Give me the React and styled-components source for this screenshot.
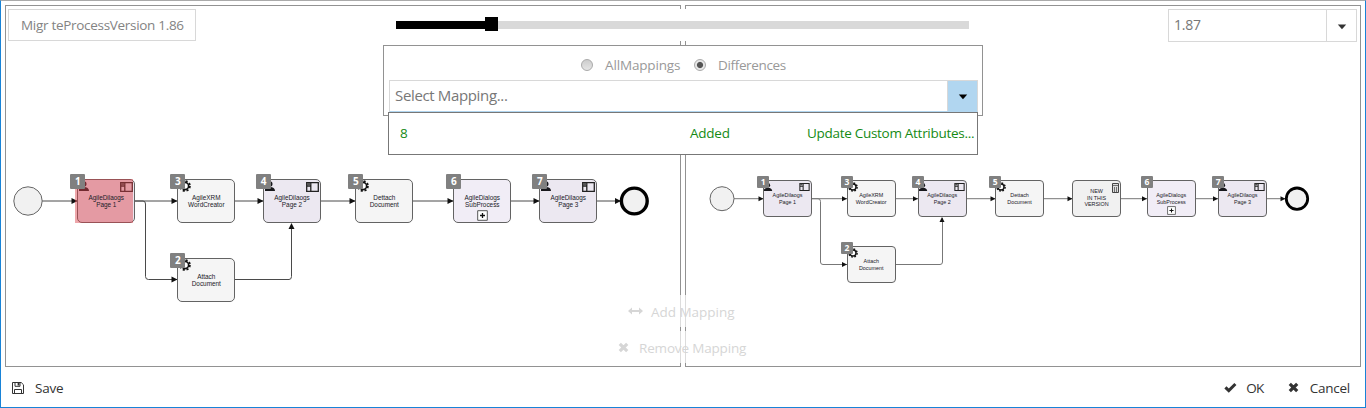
import React from "react";
import styled, { createGlobalStyle } from "styled-components";

const GlobalStyle = createGlobalStyle`
  * { box-sizing: border-box; }
  body { margin: 0; background: #fff; font-family: "Open Sans", "Noto Sans", sans-serif; }
`;

const Window = styled.main`
  position: relative;
  width: 1366px;
  height: 408px;
  display: flex;
  flex-direction: column;
  padding: 4px 4px 0;
  border: 1px solid #1883d7;
  border-top-color: #aaa;
  overflow: hidden;
`;

const Panels = styled.div`
  display: grid;
  grid-template-columns: 676px 676px;
  gap: 4px;
  height: 362px;
`;

const Panel = styled.section`
  position: relative;
  display: flex;
  align-items: flex-start;
  justify-content: ${(p) => (p.$end ? "flex-end" : "flex-start")};
  padding: 3px ${(p) => (p.$end ? 3 : 2)}px;
  border: 1px solid #929292;
`;

const Label = styled.span`
  display: inline-block;
  white-space: nowrap;
  font-size: ${(p) => p.$size || 13.5}px;
  letter-spacing: ${(p) => (p.$track === undefined ? -0.25 : p.$track)}px;
`;

const VersionBox = styled.div`
  width: 188px;
  height: 32px;
  padding-left: 12px;
  line-height: 28px;
  border: 1px solid #d8d8d8;
  color: #838383;
`;

const Select = styled.div`
  display: flex;
  width: ${(p) => p.$width}px;
  height: ${(p) => p.$height}px;
  line-height: 28px;
  border: 1px solid #d8d8d8;
  border-bottom-color: ${(p) => (p.$open ? "#b1d6f0" : "#d8d8d8")};
  color: #777;
  background: #fff;
`;

const SelectValue = styled.div`
  flex: 1;
  padding-left: 5px;
`;

const SelectButton = styled.button`
  width: 30px;
  padding: ${(p) => (p.$open ? "1px 0 0" : "2px 0 0")};
  display: flex;
  align-items: center;
  justify-content: center;
  border: 0;
  border-left: 1px solid #d8d8d8;
  background: ${(p) => (p.$open ? "#b1d6f0" : "#fff")};
  color: ${(p) => (p.$open ? "#000" : "#333")};
`;

const Overlay = styled.div`
  position: absolute;
  z-index: 3;
  left: 382px;
  top: 8px;
  width: 600px;
`;

const SliderArea = styled.div`
  height: 32px;
  padding: 8px 14px 0 13px;
  background: #fff;
`;

const Track = styled.div`
  display: flex;
  align-items: center;
  height: 14px;
  background: linear-gradient(#d9d9d9, #d9d9d9) 0 4px / 100% 8px no-repeat;
`;

const Filled = styled.div`
  width: 89px;
  height: 8px;
  background: #000;
  margin-top: 2px;
`;

const Thumb = styled.div`
  width: 13px;
  height: 14px;
  background: #000;
`;

const MappingBox = styled.div`
  height: 71px;
  margin-top: 4px;
  padding: 0 5px;
  border: 1px solid #929292;
  background: #fff;
`;

const Radios = styled.div`
  display: flex;
  align-items: center;
  height: 34px;
  padding: 3px 0 0 192px;
  color: #999;
`;

const Radio = styled.span`
  width: 12px;
  height: 12px;
  flex: none;
  margin: 1px 12px 0 0;
  border: 1px solid #aaa;
  border-radius: 50%;
  background: ${(p) => (p.$on ? "radial-gradient(circle, #555 0 2.6px, #e8e8e8 3.6px)" : "linear-gradient(#ccc, #e5e5e5)")};
`;

const RadioLabel = styled(Label)`
  width: 76px;
  margin-right: 13px;
`;

const Options = styled.div`
  display: grid;
  grid-template-columns: 290px 117px 1fr;
  align-items: center;
  position: relative;
  width: 590px;
  height: 43px;
  margin: -4px 0 0 5px;
  padding: 0 0 2px 11px;
  border: 1px solid #777;
  background: #fff;
  color: #158a15;
`;

const MappingActions = styled.div`
  position: absolute;
  z-index: 2;
  top: 294px;
  left: 611px;
  width: 144px;
  display: flex;
  flex-direction: column;
  align-items: stretch;
  gap: 4px;
`;

const MappingAction = styled.div`
  display: flex;
  align-items: center;
  height: 32px;
  padding: 1px 0 0 ${(p) => p.$indent}px;
  background: rgba(255, 255, 255, 0.68);
  color: #d6d6d6;
  svg { margin: 0 ${(p) => p.$gap}px 1px 0; flex: none; }
`;

const Footer = styled.footer`
  display: flex;
  align-items: center;
  height: 40px;
  padding: 2px 11px 0 7px;
  color: #333;
`;

const Command = styled.div`
  display: flex;
  align-items: center;
  gap: ${(p) => p.$gap}px;
  margin-left: ${(p) => p.$before || "0"};
  svg { margin-bottom: 1px; }
`;

const Canvas = styled.div`
  position: absolute;
  left: 0;
  top: 160px;
  width: 674px;
  height: 150px;
`;

const Wires = styled.svg`
  position: absolute;
  inset: 0;
`;

const Node = styled.div`
  position: absolute;
  left: ${(p) => p.$x}px;
  top: ${(p) => p.$y}px;
  width: ${(p) => p.$w}px;
  height: ${(p) => p.$h}px;
  display: flex;
  flex-direction: column;
  align-items: center;
  padding-top: ${(p) => p.$pad}px;
  border: 1px solid #636363;
  border-radius: ${(p) => (p.$small ? 4 : 5)}px;
  background: ${(p) => p.$fill};
  color: #202028;
  font-family: "Liberation Sans", sans-serif;
  font-size: ${(p) => (p.$small ? 5.4 : 6.4)}px;
  line-height: ${(p) => (p.$small ? 6.5 : 7.2)}px;
  white-space: nowrap;
`;

const Line = styled.span`
  position: relative;
  z-index: 1;
`;

const Badge = styled.span`
  position: absolute;
  z-index: 2;
  left: ${(p) => (p.$small ? -7 : -8)}px;
  top: ${(p) => (p.$small ? -5 : -6)}px;
  width: ${(p) => (p.$small ? 12 : 15)}px;
  height: ${(p) => (p.$small ? 12 : 15)}px;
  border-radius: 1px;
  background: #808080;
  color: #fff;
  text-align: center;
  font: bold ${(p) => (p.$small ? "8.5px/12px" : "10px/15px")} "Open Sans", sans-serif;
`;

const TypeIcon = styled.svg`
  position: absolute;
  left: ${(p) => (p.$small ? 0 : 1)}px;
  top: ${(p) => (p.$small ? 1 : 0)}px;
`;

const CornerIcon = styled.svg`
  position: absolute;
  top: 2px;
  right: ${(p) => (p.$small ? 1 : 1.5)}px;
`;

const SubprocessIcon = styled.svg`
  position: absolute;
  bottom: 1px;
`;

const Highlight = styled.span`
  position: absolute;
  left: -3px;
  top: -1px;
  width: 58px;
  height: 43.5px;
  background: rgba(218, 64, 72, 0.46);
`;

const Caret = () => (
  <svg width="10" height="6" viewBox="0 0 10 6"><path d="M.8 .5h8.4L5 5.2z" fill="currentColor" /></svg>
);

const CheckIcon = () => (
  <svg width="13" height="11" viewBox="0 0 13 11"><path d="M1.4 5.3 4.8 8.6 11.4 2" fill="none" stroke="currentColor" strokeWidth="3" /></svg>
);

const CrossIcon = () => (
  <svg width="11" height="11" viewBox="0 0 11 11"><path d="m1.8 1.8 7.4 7.4m0-7.4-7.4 7.4" fill="none" stroke="currentColor" strokeWidth="3.2" /></svg>
);

const ArrowsIcon = () => (
  <svg width="15" height="8" viewBox="0 0 15 8"><path d="M0 4 4 .5V3h7V.5L15 4l-4 3.5V5H4v2.5z" fill="currentColor" /></svg>
);

const SaveIcon = () => (
  <svg width="12" height="12" viewBox="0 0 12 12" fill="none" stroke="currentColor">
    <path d="M.5.5h8.7l2.3 2.3v8.7H.5zM2.5 11.5v-4h7v4M3 .5v3.8h5V.5" />
    <path d="M5.6 1h1.8v2.5H5.6z" fill="currentColor" stroke="none" />
  </svg>
);

const GearIcon = ({ small }) => (
  <TypeIcon $small={small} width={small ? 10 : 12} height={small ? 10 : 12} viewBox="0 0 12 12">
    <circle cx="6" cy="6" r="3.6" fill="#fff" stroke="#111" strokeWidth="1.6" />
    <circle cx="6" cy="6" r="4.9" fill="none" stroke="#111" strokeWidth="1.8" strokeDasharray="2.1 1.75" />
  </TypeIcon>
);

const PersonIcon = ({ small }) => (
  <TypeIcon $small={small} width={small ? 9 : 11} height={small ? 9 : 11} viewBox="0 0 11 11" fill="#18181c">
    <circle cx="4.8" cy="4" r="2.7" />
    <path d="M-.5 10.9C-.5 8.6 2 7 5 7s5 1.6 5 3.9z" />
  </TypeIcon>
);

const FormIcon = ({ small }) => (
  <CornerIcon $small={small} width={small ? 11 : 13} height={small ? 8 : 10} viewBox="0 0 13 10">
    <path d="M.7.7h11.6v8.6H.7zM4.8.7v8.6M.7 4h4" fill="none" stroke="#222" strokeWidth="1.3" />
    <path d="M1 1h3v2H1z" fill="#555" />
  </CornerIcon>
);

const ScriptIcon = () => (
  <CornerIcon $small width="7" height="10" viewBox="0 0 7 10">
    <path d="M.5.5h6v9h-6z" fill="#ddd" stroke="#444" />
    <path d="M1 2.5h5M2.5 4v5M4.5 4v5" stroke="#555" strokeWidth=".8" />
  </CornerIcon>
);

const LEFT = {
  nodeW: 58, nodeH: 44, startX: 22, endX: 628.3, midY: 35, r: 14.2,
  nodes: [
    { id: 1, x: 71.3, y: 13, lines: ["AgileDilaogs", "Page 1"], kind: "dialog", hot: true },
    { id: 3, x: 171.3, y: 13, lines: ["AgileXRM", "WordCreator"], kind: "gear" },
    { id: 2, x: 171.3, y: 92, lines: ["Attach", "Document"], kind: "gear" },
    { id: 4, x: 257, y: 13, lines: ["AgileDilaogs", "Page 2"], kind: "dialog" },
    { id: 5, x: 349.3, y: 13, lines: ["Dettach", "Document"], kind: "gear" },
    { id: 6, x: 447.3, y: 13, lines: ["AgileDialogs", "SubProcess"], kind: "sub" },
    { id: 7, x: 533.3, y: 13, lines: ["AgileDilaogs", "Page 3"], kind: "dialog" },
  ],
  links: [[36, 71.5], [129, 171.5], [229, 257.5], [315, 349.5], [407, 447.5], [505, 533.5], [591, 615]],
  fork: "M129 35H137Q139.5 35 139.5 38V110.5Q139.5 113.5 142.5 113.5H171",
  forkTip: [171.5, 113.5],
  join: "M229 113.5H283Q285.5 113.5 285.5 110.5V58",
  joinTip: [285.5, 57],
};

const RIGHT = {
  small: true, nodeW: 48.5, nodeH: 37, startX: 36, endX: 611, midY: 32.7, r: 12,
  nodes: [
    { id: 1, x: 77.3, y: 14, lines: ["AgileDilaogs", "Page 1"], kind: "dialog" },
    { id: 3, x: 161, y: 14, lines: ["AgileXRM", "WordCreator"], kind: "gear" },
    { id: 2, x: 161, y: 80, lines: ["Attach", "Document"], kind: "gear" },
    { id: 4, x: 232, y: 14, lines: ["AgileDilaogs", "Page 2"], kind: "dialog" },
    { id: 5, x: 309.3, y: 14, lines: ["Dettach", "Document"], kind: "gear" },
    { id: "new", x: 386.3, y: 14, lines: ["NEW", "IN THIS", "VERSION"], kind: "script" },
    { id: 6, x: 461, y: 14, lines: ["AgileDialogs", "SubProcess"], kind: "sub" },
    { id: 7, x: 532.3, y: 14, lines: ["AgileDilaogs", "Page 3"], kind: "dialog" },
  ],
  links: [[48, 77.5], [125, 161], [209, 232], [280, 309.5], [357, 386.5], [434, 461], [509, 532], [580, 599.5]],
  fork: "M125 32.7H132Q134.5 32.7 134.5 35.5V96Q134.5 98.5 137 98.5H161",
  forkTip: [161, 98.5],
  join: "M209 98.5H254Q256.5 98.5 256.5 96V52",
  joinTip: [256, 51],
};

const fills = { dialog: "#ece8f1", sub: "#f1edf6", gear: "#f5f5f5", script: "#f1f1f1" };

function Diagram({ data }) {
  const { small, midY, nodeW, nodeH } = data;
  const a = small ? 5 : 6;
  const b = small ? 2.5 : 3;
  return (
    <Canvas>
      <Wires width="674" height="150">
        <g fill="none" stroke={small ? "#777" : "#4a4a4a"} strokeWidth="1">
          {data.links.map(([x1, x2]) => <path key={x1} d={`M${x1} ${midY}H${x2}`} />)}
          <path d={data.fork} />
          <path d={data.join} />
        </g>
        <g fill="#111">
          {data.links.map(([, x]) => <path key={x} d={`M${x} ${midY}l${-a} ${-b}v${b * 2}z`} />)}
          <path d={`M${data.forkTip} l${-a} ${-b}v${b * 2}z`} />
          <path d={`M${data.joinTip} l${-b} ${a}h${b * 2}z`} />
        </g>
        <circle cx={data.startX} cy={midY} r={data.r} fill="#f1f1f1" stroke="#666" />
        <circle cx={data.endX} cy={midY} r={data.r - 1.3} fill="#f1f1f1" stroke="#000" strokeWidth={small ? 2.8 : 3.4} />
      </Wires>
      {data.nodes.map((n) => (
        <Node key={n.id} $x={n.x} $y={n.y} $w={nodeW} $h={nodeH} $small={small} $fill={fills[n.kind]}
          $pad={n.kind === "script" ? 7 : small ? 11 : 13.5}>
          {n.kind === "dialog" && <><PersonIcon small={small} /><FormIcon small={small} /></>}
          {n.kind === "gear" && <GearIcon small={small} />}
          {n.kind === "script" && <ScriptIcon />}
          {n.hot && <Highlight />}
          {n.lines.map((line) => <Line key={line}>{line}</Line>)}
          {n.kind === "sub" && (
            <SubprocessIcon width={small ? 9 : 11} height={small ? 9 : 11} viewBox="0 0 11 11">
              <path d="M.7.7h9.6v9.6H.7z" fill="#fff" stroke="#555" />
              <path d="M5.5 3v5M3 5.5h5" stroke="#111" strokeWidth="1.3" />
            </SubprocessIcon>
          )}
          {n.id !== "new" && <Badge $small={small}>{n.id}</Badge>}
        </Node>
      ))}
    </Canvas>
  );
}

export default function App() {
  return (
    <Window>
      <GlobalStyle />
      <Panels>
        <Panel>
          <VersionBox><Label $track={-0.3}>Migr teProcessVersion 1.86</Label></VersionBox>
          <Diagram data={LEFT} />
        </Panel>
        <Panel $end>
          <Select $width={189} $height={33}>
            <SelectValue><Label $size={14} $track={-0.2}>1.87</Label></SelectValue>
            <SelectButton><Caret /></SelectButton>
          </Select>
          <Diagram data={RIGHT} />
        </Panel>
      </Panels>
      <Overlay>
        <SliderArea><Track><Filled /><Thumb /></Track></SliderArea>
        <MappingBox>
          <Radios>
            <Radio /><RadioLabel $track={-0.15}>AllMappings</RadioLabel>
            <Radio $on /><RadioLabel $track={-0.35}>Differences</RadioLabel>
          </Radios>
          <Select $width={589} $height={32} $open>
            <SelectValue><Label $size={15} $track={-0.35}>Select Mapping...</Label></SelectValue>
            <SelectButton $open><Caret /></SelectButton>
          </Select>
        </MappingBox>
        <Options>
          <Label>8</Label><Label>Added</Label><Label $track={-0.29}>Update Custom Attributes...</Label>
        </Options>
      </Overlay>
      <MappingActions>
        <MappingAction $indent={16} $gap={8}><ArrowsIcon /><Label $track={-0.02}>Add Mapping</Label></MappingAction>
        <MappingAction $indent={6} $gap={10}><CrossIcon /><Label $track={-0.17}>Remove Mapping</Label></MappingAction>
      </MappingActions>
      <Footer>
        <Command $gap={11}><SaveIcon /><Label>Save</Label></Command>
        <Command $gap={9} $before="auto"><CheckIcon /><Label $track={-0.6}>OK</Label></Command>
        <Command $gap={11} $before="24px"><CrossIcon /><Label>Cancel</Label></Command>
      </Footer>
    </Window>
  );
}
